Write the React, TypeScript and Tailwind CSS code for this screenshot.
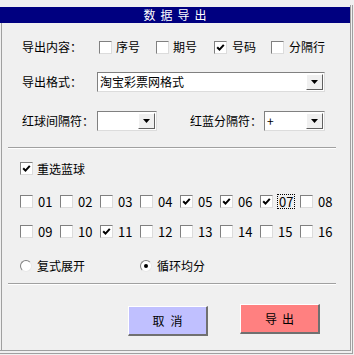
import React from "react";

const FONT = { fontFamily: '"Noto Sans CJK SC", "Noto Sans", sans-serif' };

function Check({ checked }: { checked?: boolean }) {
  return (
    <span className="w-[13px] h-[13px] bg-white border border-t-[#808080] border-l-[#808080] border-r-[#dcdcdc] border-b-[#dcdcdc] flex items-center justify-center shrink-0">
      {checked && (
        <svg width="9" height="9" viewBox="0 0 9 9">
          <path d="M1.2 4.2 L3.5 6.6 L7.8 1.8" stroke="black" strokeWidth="2" fill="none" />
        </svg>
      )}
    </span>
  );
}

function Radio({ checked }: { checked?: boolean }) {
  return (
    <span className="w-[12px] h-[12px] rounded-full bg-white border border-t-[#808080] border-l-[#808080] border-r-[#e8e8e8] border-b-[#e8e8e8] flex items-center justify-center shrink-0">
      {checked && <span className="w-[4px] h-[4px] rounded-full bg-black" />}
    </span>
  );
}

function DropBtn() {
  return (
    <span className="w-[17px] h-[16px] bg-[#f0f0f0] border border-t-white border-l-white border-r-[#606060] border-b-[#606060] flex items-center justify-center shrink-0">
      <svg width="7" height="4" viewBox="0 0 7 4">
        <path d="M0 0 H7 L3.5 4 Z" fill="black" />
      </svg>
    </span>
  );
}

function Select({ w, text }: { w: string; text?: string }) {
  return (
    <div
      className={`${w} h-[20px] bg-white border border-t-[#808080] border-l-[#808080] border-r-[#dcdcdc] border-b-[#dcdcdc] flex items-center justify-between pl-[2px] pr-[1px]`}
    >
      <span className="text-[12px] leading-[14px] text-black">{text}</span>
      <DropBtn />
    </div>
  );
}

function NumItem({ n, checked, focus }: { n: string; checked?: boolean; focus?: boolean }) {
  return (
    <div className="w-[40px] flex items-center shrink-0">
      <Check checked={checked} />
      {focus ? (
        <span className="ml-[4px] border border-dotted border-black px-[1px] text-[13px] leading-[13px] text-black">{n}</span>
      ) : (
        <span className="ml-[5px] text-[13px] leading-[14px] text-black">{n}</span>
      )}
    </div>
  );
}

function Groove() {
  return (
    <div className="ml-[6px] w-[328px]">
      <div className="h-[1px] bg-[#a0a0a0]" />
      <div className="h-[1px] bg-white" />
    </div>
  );
}

export default function App() {
  const row1 = ["01", "02", "03", "04", "05", "06", "07", "08"];
  const row2 = ["09", "10", "11", "12", "13", "14", "15", "16"];
  const checkedSet = new Set(["05", "06", "07", "11"]);
  return (
    <div className="w-[354px] h-[355px] bg-[#f0f0f0] pt-[5px] overflow-hidden" style={FONT}>
      <div className="w-[353px] h-[349px] border-r border-b border-[#a0a0a0]">
        <div className="w-[351px] h-[346px] border-r border-b border-[#a0a0a0] pt-[2px] flex flex-col">
          <div className="h-[16px] bg-[#000080] flex items-center justify-center gap-[5px] text-white text-[12px] leading-[14px]">
            <span>数</span>
            <span>据</span>
            <span>导</span>
            <span>出</span>
          </div>
          <div className="flex-1 ml-[1px] border-l border-[#a0a0a0] flex flex-col text-black">
            {/* row 1 */}
            <div className="mt-[17px] h-[14px] flex items-center text-[12px] leading-[14px]">
              <span className="ml-[20px] w-[77px]">导出内容：</span>
              <div className="w-[57px] flex items-center">
                <Check />
                <span className="ml-[4px]">序号</span>
              </div>
              <div className="w-[58px] flex items-center">
                <Check />
                <span className="ml-[4px]">期号</span>
              </div>
              <div className="w-[57px] flex items-center">
                <Check checked />
                <span className="ml-[5px]">号码</span>
              </div>
              <div className="flex items-center">
                <Check />
                <span className="ml-[5px]">分隔行</span>
              </div>
            </div>
            {/* row 2 */}
            <div className="mt-[18px] h-[20px] flex items-center text-[12px] leading-[14px]">
              <span className="ml-[20px] w-[75px]">导出格式：</span>
              <Select w="w-[228px]" text="淘宝彩票网格式" />
            </div>
            {/* row 3 */}
            <div className="mt-[19px] h-[20px] flex items-center text-[12px] leading-[14px]">
              <span className="ml-[20px] w-[75px]">红球间隔符：</span>
              <Select w="w-[60px]" />
              <span className="ml-[33px] w-[74px]">红蓝分隔符：</span>
              <Select w="w-[61px]" text="+" />
            </div>
            <div className="mt-[16px]">
              <Groove />
            </div>
            {/* blue */}
            <div className="mt-[13px] h-[13px] flex items-center text-[12px] leading-[14px]">
              <div className="ml-[18px] flex items-center">
                <Check checked />
                <span className="ml-[4px]">重选蓝球</span>
              </div>
            </div>
            <div className="mt-[20px] h-[13px] flex items-center">
              <div className="ml-[18px] flex">
                {row1.map((n) => (
                  <NumItem key={n} n={n} checked={checkedSet.has(n)} focus={n === "07"} />
                ))}
              </div>
            </div>
            <div className="mt-[17px] h-[13px] flex items-center">
              <div className="ml-[18px] flex">
                {row2.map((n) => (
                  <NumItem key={n} n={n} checked={checkedSet.has(n)} />
                ))}
              </div>
            </div>
            {/* radios */}
            <div className="mt-[21px] h-[13px] flex items-center text-[12px] leading-[14px]">
              <div className="ml-[18px] w-[120px] flex items-center">
                <Radio />
                <span className="ml-[5px]">复式展开</span>
              </div>
              <div className="flex items-center">
                <Radio checked />
                <span className="ml-[5px]">循环均分</span>
              </div>
            </div>
            <div className="mt-[11px]">
              <Groove />
            </div>
            {/* buttons */}
            <div className="mt-[19px] flex items-start text-[12px] leading-[14px]">
              <div className="ml-[126px] mt-[2px] w-[80px] h-[30px] bg-[#c0c0ff] border-t border-l border-white border-r-2 border-b-2 border-r-[#707070] border-b-[#707070] flex items-center justify-center gap-[6px]">
                <span>取</span>
                <span>消</span>
              </div>
              <div className="ml-[32px] w-[80px] h-[30px] bg-[#ff8080] border-t border-l border-white border-r-2 border-b-2 border-r-[#707070] border-b-[#707070] flex items-center justify-center gap-[5px]">
                <span>导</span>
                <span>出</span>
              </div>
            </div>
          </div>
        </div>
      </div>
    </div>
  );
}
